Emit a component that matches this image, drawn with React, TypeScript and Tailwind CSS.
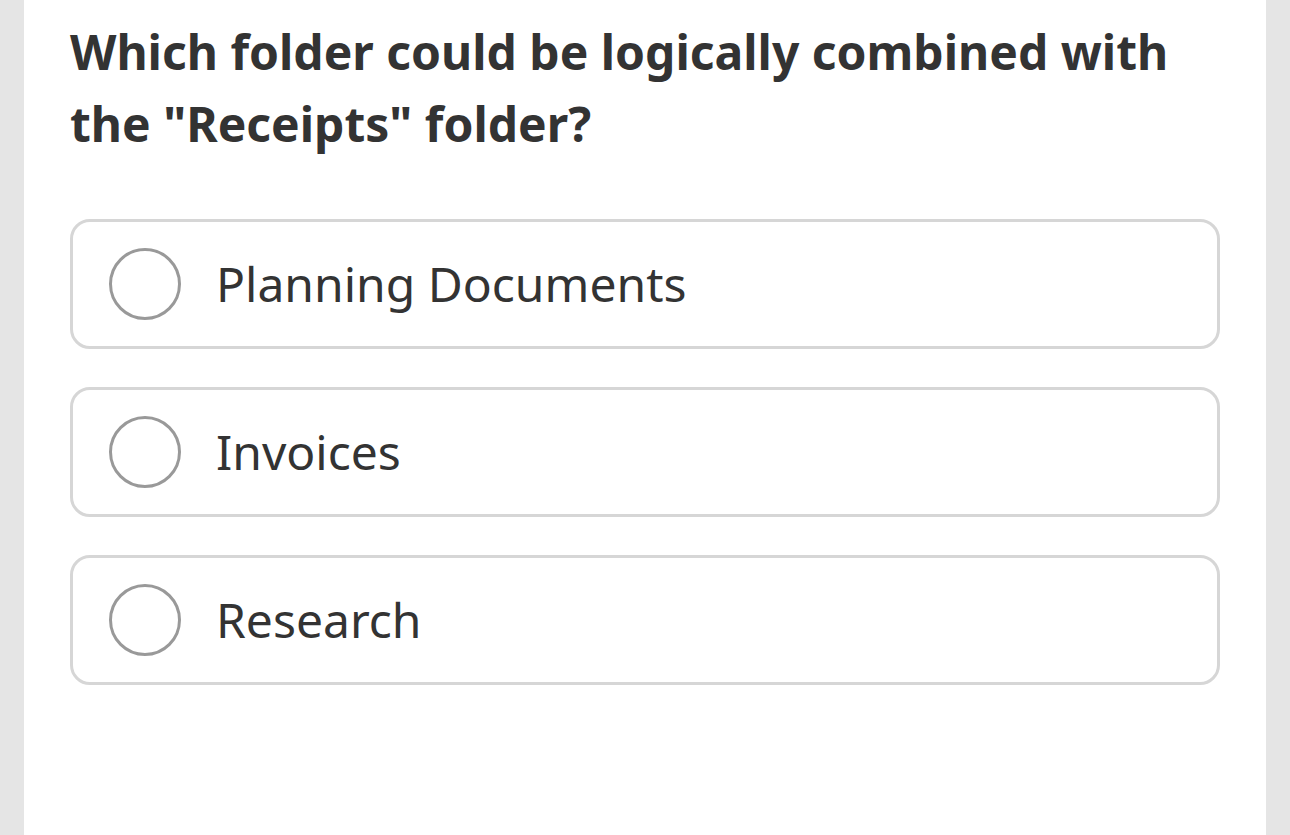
const options = ["Planning Documents", "Invoices", "Research"];

export default function App() {
  return (
    <div className="min-h-screen bg-[#e5e5e5] px-6" style={{ fontFamily: '"Noto Sans", sans-serif' }}>
      <div className="min-h-[835px] bg-white px-[46px] pt-[16px]">
        <h1 className="text-[48px] font-bold leading-[72px] text-[#333333]">
          Which folder could be logically combined with the "Receipts" folder?
        </h1>
        <div className="mt-[59px] flex flex-col gap-[38px]">
          {options.map((o) => (
            <label
              key={o}
              className="flex h-[130px] items-center rounded-[20px] border-[3px] border-[#d6d6d6] pl-[36px]"
            >
              <span className="h-[72px] w-[72px] shrink-0 rounded-full border-[3px] border-[#999999]" />
              <span className="ml-[35px] text-[48px] text-[#333333]">{o}</span>
            </label>
          ))}
        </div>
      </div>
    </div>
  );
}
